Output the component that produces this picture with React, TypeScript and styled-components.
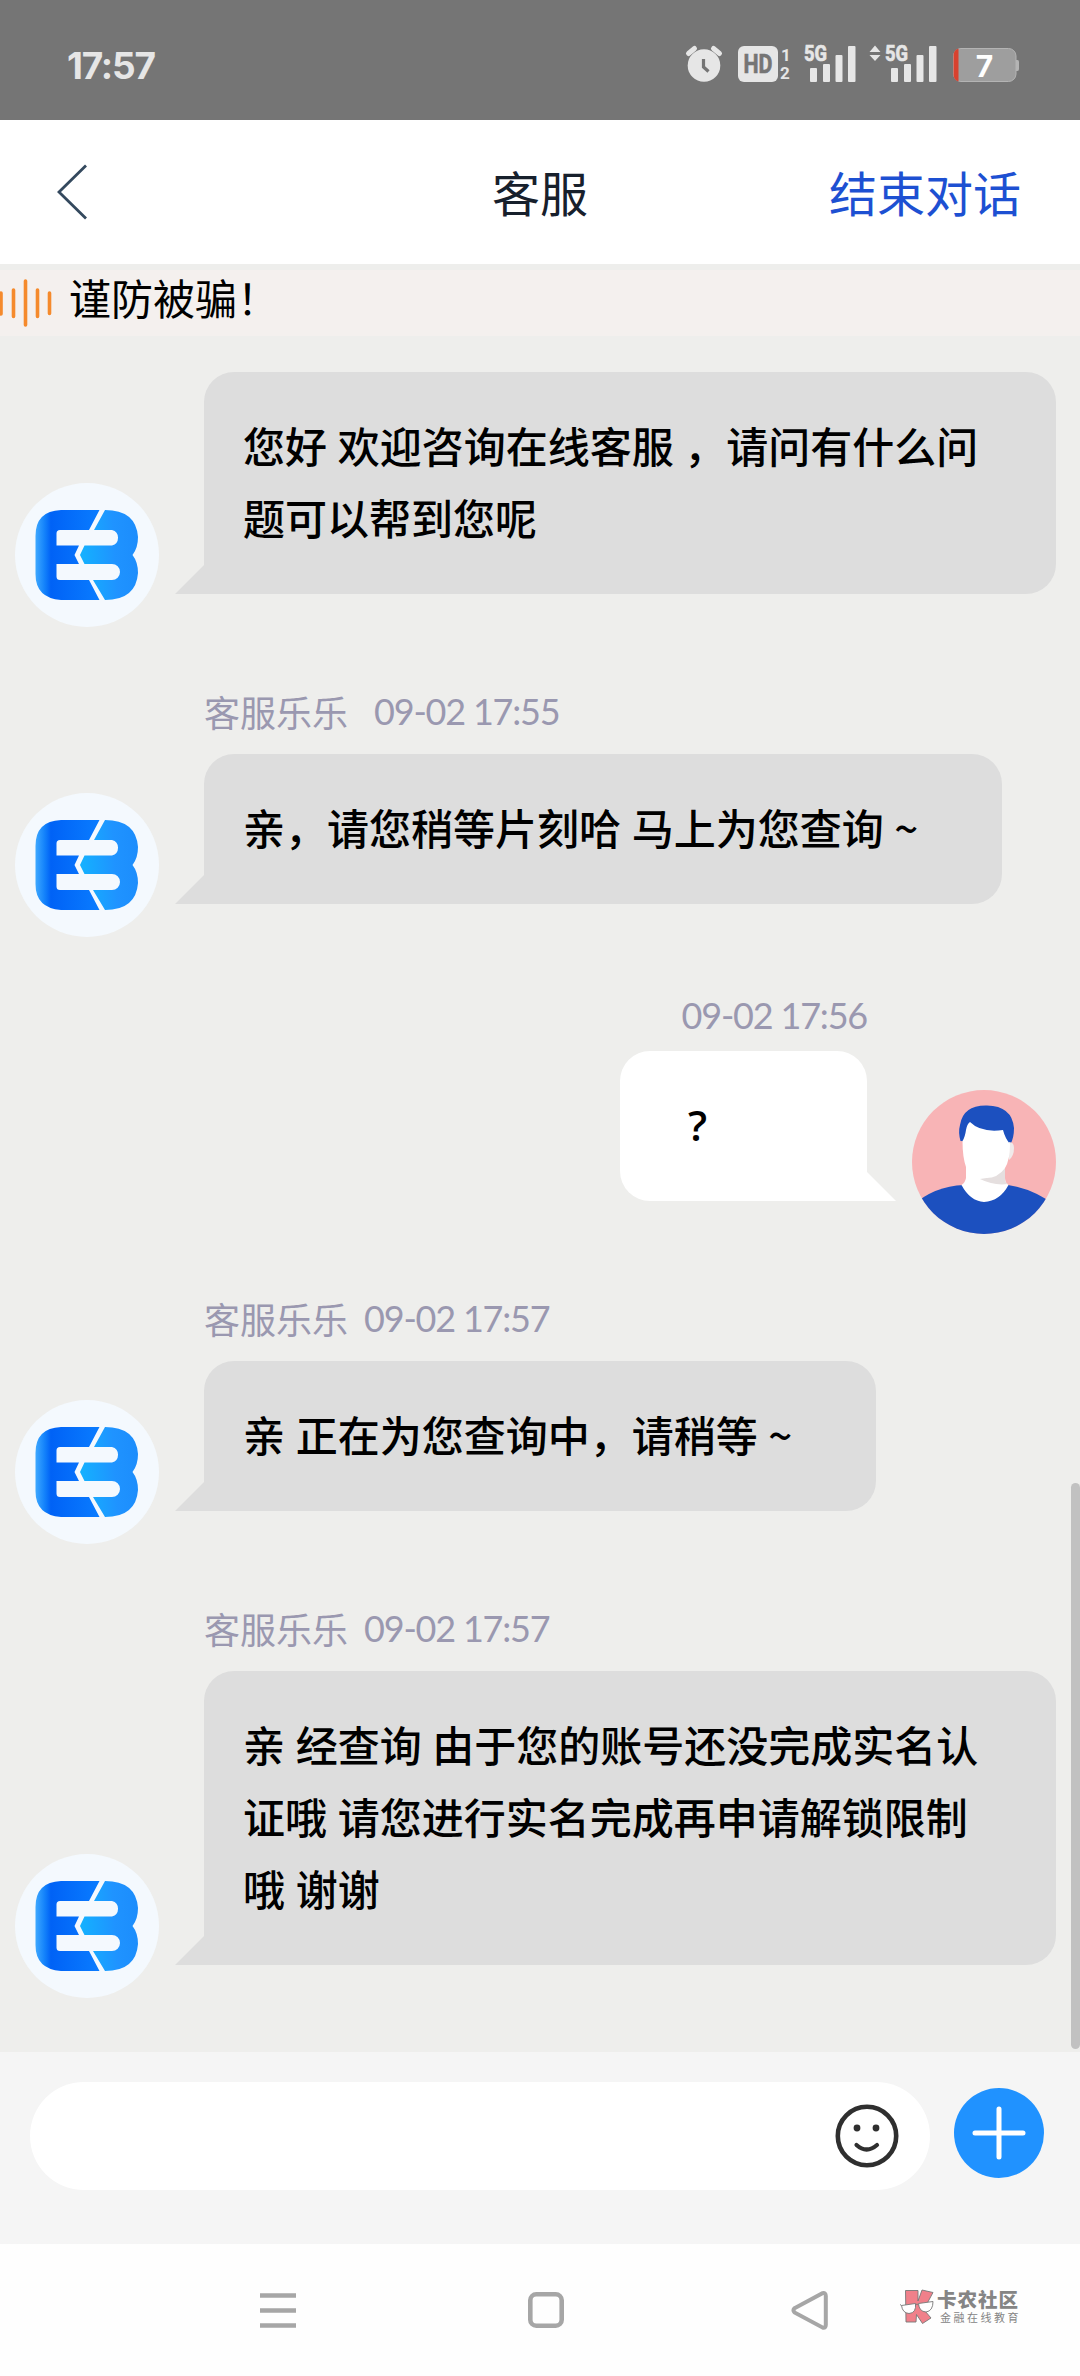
import React from "react";
import styled, { createGlobalStyle, css } from "styled-components";

const cjk = '"Noto Sans CJK SC", "Noto Sans", sans-serif';

const GlobalStyle = createGlobalStyle`
  * { box-sizing: border-box; }
  body { margin: 0; background: #fefefe; font-family: ${cjk}; }
`;

const Screen = styled.div`
  width: 1080px;
  height: 2376px;
  display: flex;
  flex-direction: column;
  overflow: hidden;
  background: #eeeeec;
`;

const StatusBar = styled.header`
  height: 120px;
  flex: none;
  display: flex;
  justify-content: space-between;
  padding: 0 60px 0 67px;
  background: #757575;
`;

const Clock = styled.span`
  margin-top: 44px;
  font: 700 37px/44px Inter, sans-serif;
  letter-spacing: -1.2px;
  color: #e6e6e6;
`;

const StatusIcons = styled.svg`
  display: block;
  width: 340px;
  height: 120px;
  text { font-family: Roboto, sans-serif; font-weight: 700; }
`;

const BatteryLevel = styled.text`
  && { font-family: Inter, sans-serif; }
`;

const TitleBar = styled.nav`
  height: 144px;
  flex: none;
  display: grid;
  grid-template-columns: 1fr auto 1fr;
  align-items: center;
  padding: 0 60px 0 54px;
  background: #fff;
  font-size: 48px;
  line-height: 72px;
`;

const BackIcon = styled.svg`
  width: 36px;
  height: 60px;
`;

const Title = styled.h1`
  margin: 0 0 3px;
  padding-left: 6px;
  font-size: 48px;
  font-weight: 400;
  color: #17202c;
`;

const EndButton = styled.button`
  justify-self: end;
  margin: 0 -1px 3px 0;
  padding: 0;
  border: 0;
  background: none;
  font: inherit;
  color: #1d50d2;
`;

const Notice = styled.div`
  height: 66px;
  flex: none;
  margin-top: 6px;
  display: flex;
  gap: 16px;
  background: #f4f0ee;
  font-size: 42px;
  line-height: 53px;
  color: #000;
`;

const SoundIcon = styled.svg`
  width: 53px;
  height: 66px;
`;

const ChatArea = styled.div`
  flex: 1;
  display: flex;
  min-height: 0;
`;

const Messages = styled.main`
  flex: 1;
  padding: 36px 15px 0 15px;
`;

const ScrollThumb = styled.div`
  width: 9px;
  height: 566px;
  align-self: flex-end;
  margin-bottom: 3px;
  border-radius: 5px;
  background: #c1c1c1;
`;

const Row = styled.section<{ $mine?: boolean; $gap: number }>`
  display: flex;
  flex-direction: ${(p) => (p.$mine ? "row-reverse" : "row")};
  align-items: flex-end;
  gap: 45px;
  margin-top: ${(p) => p.$gap}px;
`;

const Avatar = styled.svg`
  display: block;
  width: 144px;
  height: 144px;
  flex: none;
`;

const Body = styled.div<{ $mine?: boolean }>`
  display: flex;
  flex-direction: column;
  align-items: ${(p) => (p.$mine ? "flex-end" : "flex-start")};
  padding-bottom: 33px;
`;

const Meta = styled.div<{ $mine?: boolean; $gap?: number }>`
  display: flex;
  gap: ${(p) => p.$gap ?? 16}px;
  height: 36px;
  margin-bottom: ${(p) => (p.$mine ? 18 : 25)}px;
  font-size: 36px;
  line-height: 36px;
  color: #9a98b0;
`;

const Time = styled.time`
  font-family: Lato, sans-serif;
  letter-spacing: -1.2px;
`;

const leftTail = css`
  border-radius: 30px 30px 30px 0;
  &::after {
    left: -29px;
    clip-path: polygon(100% 0, 100% 100%, 0 100%);
  }
`;

const rightTail = css`
  border-radius: 30px 30px 0 30px;
  &::after {
    right: -29px;
    clip-path: polygon(0 0, 100% 100%, 0 100%);
  }
`;

const Bubble = styled.div<{ $mine?: boolean; $width: number }>`
  position: relative;
  width: ${(p) => p.$width}px;
  padding: ${(p) => (p.$mine ? "38px 0 40px 68px" : "37px 0 41px 39px")};
  background: ${(p) => (p.$mine ? "#fff" : "#ddd")};
  font-family: ${(p) => (p.$mine ? `"Open Sans", ${cjk}` : cjk)};
  font-size: 42px;
  font-weight: ${(p) => (p.$mine ? 600 : 500)};
  line-height: 72px;
  white-space: pre;
  color: #000;
  &::after {
    content: "";
    position: absolute;
    bottom: 0;
    width: 30px;
    height: 30px;
    background: inherit;
  }
  ${(p) => (p.$mine ? rightTail : leftTail)}
`;

const Line = styled.div`
  height: 72px;
  word-spacing: 1.2px;
`;

const Composer = styled.footer`
  height: 192px;
  flex: none;
  display: flex;
  align-items: flex-start;
  gap: 24px;
  padding: 30px 36px 0 30px;
  background: #f5f5f5;
`;

const InputPill = styled.div`
  width: 900px;
  height: 108px;
  display: flex;
  align-items: center;
  justify-content: flex-end;
  padding-right: 31px;
  border-radius: 54px;
  background: #fff;
`;

const Smile = styled.svg`
  width: 64px;
  height: 64px;
`;

const AddButton = styled.svg`
  width: 90px;
  height: 90px;
  margin-top: 6px;
`;

const NavBar = styled.div`
  height: 132px;
  flex: none;
  display: flex;
  background: #fefefe;
`;

const NavIcons = styled.svg`
  width: 900px;
  height: 132px;
`;

const Watermark = styled.div`
  display: flex;
  gap: 3px;
  padding-top: 44px;
`;

const WatermarkLogo = styled.svg`
  width: 34px;
  height: 38px;
`;

const WatermarkText = styled.div`
  display: flex;
  flex-direction: column;
  padding-top: 1px;
  font-family: "Liberation Sans", ${cjk};
  white-space: nowrap;
  color: #858585;
`;

const Brand = styled.span`
  font-size: 19.5px;
  font-weight: 900;
  line-height: 23px;
  letter-spacing: 1px;
`;

const Slogan = styled.span`
  padding-left: 3px;
  font-size: 11px;
  line-height: 13px;
  letter-spacing: 2.5px;
`;

function Signal({ x }: { x: number }) {
  return (
    <g fill="#e6e6e6">
      <text x={x} y={61} fontSize={21.5} textLength={23} lengthAdjust="spacingAndGlyphs" stroke="#e6e6e6" strokeWidth={0.7}>5G</text>
      <rect x={x + 6} y={68} width={7} height={14} rx={1} />
      <rect x={x + 19} y={64} width={7} height={18} rx={1} />
      <rect x={x + 31.5} y={55} width={7} height={27} rx={1} />
      <rect x={x + 44} y={46} width={7.5} height={36} rx={1} />
    </g>
  );
}

function StatusGlyphs() {
  return (
    <StatusIcons viewBox="680 0 340 120">
      <circle cx="704" cy="65.5" r="16.3" fill="#e6e6e6" />
      <path d="M688.500 53.500l6-5M719.500 53.500l-6-5" stroke="#e6e6e6" strokeWidth="5" strokeLinecap="round" />
      <path d="M703.500 59v8l5 4.500" stroke="#757575" strokeWidth="3.200" fill="none" />
      <rect x="738" y="46" width="40" height="36" rx="6" fill="#e6e6e6" />
      <text x="743.500" y="73" fontSize="25" fill="#757575" textLength="29" lengthAdjust="spacingAndGlyphs" stroke="#757575" strokeWidth="0.600">HD</text>
      <text x="781" y="61" fontSize="17" fill="#e6e6e6">1</text>
      <text x="780" y="79" fontSize="17" fill="#e6e6e6">2</text>
      <Signal x={804} />
      <path d="M869.500 52l5.500-6.500 5.500 6.500zM869.500 55l5.500 6 5.500-6z" fill="#e6e6e6" />
      <Signal x={885} />
      <path d="M1016 60h1.500q1.500 0 1.500 2v7q0 2-1.500 2H1016z" fill="#b4b4b4" />
      <rect x="953.500" y="48.500" width="62.500" height="33" rx="7.500" fill="#9e9e9e" stroke="#b4b4b4" />
      <path d="M958.500 48.500v33q-5-1.500-5-7v-19q0-5.500 5-7z" fill="#d8412f" />
      <BatteryLevel x="984.500" y="76.500" fontSize="30" fill="#fff" textAnchor="middle">7</BatteryLevel>
    </StatusIcons>
  );
}

function AgentAvatar() {
  return (
    <Avatar viewBox="0 0 144 144">
      <defs>
        <linearGradient id="agentLeft" x1="0" x2="1" y1="0" y2="0">
          <stop offset="0" stopColor="#3fa9ff" />
          <stop offset="0.140" stopColor="#1483fb" />
          <stop offset="0.240" stopColor="#0062f6" />
          <stop offset="1" stopColor="#0a7cff" />
        </linearGradient>
        <linearGradient id="agentRight" x1="0" x2="1" y1="0.500" y2="0.400">
          <stop offset="0" stopColor="#14b2ff" />
          <stop offset="0.600" stopColor="#1f93ff" />
          <stop offset="1" stopColor="#1c8dfc" />
        </linearGradient>
      </defs>
      <circle cx="72" cy="72" r="72" fill="#f4f9fe" />
      <path d="M46 27H84.500L74 47H45q-3.500 0-3.500 3.500V62.500H64L59.500 72 64 81H41.500V93.500q0 3.500 3.500 3.500H74L84.500 117H46Q20.500 115 20.500 91V53Q20.500 28 46 27z" fill="url(#agentLeft)" />
      <path d="M90 27Q121 27 123 54 123 65 117.500 72 123 79 123 90 121 117 90 117L78 97H97a8 8 0 0 0 0-16H69.500L65 72 69.500 62.500H97a8 8 0 0 0 0-15.500H79z" fill="url(#agentRight)" />
    </Avatar>
  );
}

function UserAvatar() {
  return (
    <Avatar viewBox="0 0 144 144">
      <defs>
        <clipPath id="userClip"><circle cx="72" cy="72" r="72" /></clipPath>
      </defs>
      <g clipPath="url(#userClip)">
        <rect width="144" height="144" fill="#f8b4b6" />
        <path d="M0 116Q22 96 52 95H96Q122 99 144 116V144H0z" fill="#1c50bf" />
        <path d="M54 72V88Q53 93 49.500 95 58 111 72 112 88 111 96.500 95 93 93 93 88V72z" fill="#fff" />
        <path d="M68 89Q83 88 93 75V88Q93 93 96 94 82 96 68 89z" fill="#e5dfdf" />
        <path d="M48.500 51Q46 42 48 35 51 15 75 15.500 100 16 102 38 102 48 98.500 54z" fill="#1c50bf" />
        <path d="M97 52q5 0 5 6 0 8-5 12z" fill="#f0eaea" />
        <path d="M58 32Q69 43 91 40 93 48 98 54 98 70 93 78 86 88 74 88 61 87 54 77 50.500 67 50.500 51 53 47 54 40 55 34 58 32z" fill="#fff" />
      </g>
    </Avatar>
  );
}

type Message = {
  mine?: boolean;
  name?: string;
  time?: string;
  gap: number;
  metaGap?: number;
  width: number;
  lines: string[];
};

const messages: Message[] = [
  { gap: 0, width: 852, lines: ["您好 欢迎咨询在线客服 ，请问有什么问", "题可以帮到您呢"] },
  { gap: 66, name: "客服乐乐", time: "09-02 17:55", metaGap: 26, width: 798, lines: ["亲，请您稍等片刻哈 马上为您查询 ~"] },
  { gap: 60, mine: true, time: "09-02 17:56", width: 247, lines: ["?"] },
  { gap: 66, name: "客服乐乐", time: "09-02 17:57", width: 672, lines: ["亲 正在为您查询中，请稍等 ~"] },
  { gap: 66, name: "客服乐乐", time: "09-02 17:57", width: 852, lines: ["亲 经查询 由于您的账号还没完成实名认", "证哦 请您进行实名完成再申请解锁限制", "哦 谢谢"] },
];

function MessageRow({ m }: { m: Message }) {
  return (
    <Row $mine={m.mine} $gap={m.gap}>
      {m.mine ? <UserAvatar /> : <AgentAvatar />}
      <Body $mine={m.mine}>
        {m.time && (
          <Meta $mine={m.mine} $gap={m.metaGap}>
            {m.name && <span>{m.name}</span>}
            <Time>{m.time}</Time>
          </Meta>
        )}
        <Bubble $mine={m.mine} $width={m.width}>
          {m.lines.map((line) => <Line key={line}>{line}</Line>)}
        </Bubble>
      </Body>
    </Row>
  );
}

export default function App() {
  return (
    <Screen>
      <GlobalStyle />
      <StatusBar>
        <Clock>17:57</Clock>
        <StatusGlyphs />
      </StatusBar>
      <TitleBar>
        <BackIcon viewBox="0 0 36 60">
          <path d="M32 3.500L5 30 32 56.500" fill="none" stroke="#34495e" strokeWidth="2.800" />
        </BackIcon>
        <Title>客服</Title>
        <EndButton>结束对话</EndButton>
      </TitleBar>
      <Notice>
        <SoundIcon viewBox="0 0 53 66">
          <path d="M1 23V44M13.500 20V46.500M25.500 11V55M37.500 20V46.500M49.500 23V43.500" stroke="#f58a2c" strokeWidth="3.600" strokeLinecap="round" />
        </SoundIcon>
        <span>谨防被骗！</span>
      </Notice>
      <ChatArea>
        <Messages>
          {messages.map((m, i) => <MessageRow key={i} m={m} />)}
        </Messages>
        <ScrollThumb />
      </ChatArea>
      <Composer>
        <InputPill>
          <Smile viewBox="0 0 64 64">
            <circle cx="32" cy="32" r="29.200" fill="none" stroke="#2f2f2f" strokeWidth="4.600" />
            <circle cx="22" cy="24" r="3.400" fill="#2f2f2f" />
            <circle cx="41" cy="24" r="3.400" fill="#2f2f2f" />
            <path d="M21.500 41Q31.500 50 42 41" fill="none" stroke="#2f2f2f" strokeWidth="4.200" strokeLinecap="round" />
          </Smile>
        </InputPill>
        <AddButton viewBox="0 0 90 90">
          <circle cx="45" cy="45" r="45" fill="#2092ff" />
          <path d="M21 45H69M45 21V69" stroke="#fff" strokeWidth="5" strokeLinecap="round" />
        </AddButton>
      </Composer>
      <NavBar>
        <NavIcons viewBox="0 2244 900 132">
          <path d="M260 2295.500h36M260 2310.500h36M260 2325.500h36" stroke="#a6a6a6" strokeWidth="4.500" />
          <rect x="530.300" y="2294.300" width="31.400" height="31.400" rx="6" fill="none" stroke="#a6a6a6" strokeWidth="4.600" />
          <path d="M794.500 2308.200L822.500 2293.200Q825.800 2292.500 825.800 2296V2325Q825.800 2328.500 822.500 2327.500L794.500 2312.500Q792.500 2310.300 794.500 2308.200z" fill="none" stroke="#a6a6a6" strokeWidth="4" />
        </NavIcons>
        <Watermark>
          <WatermarkLogo viewBox="0 0 34 38">
            <g fill="#f0808a" stroke="#777" strokeWidth="0.900">
              <path d="M5.500 2.500H18V13L22 2 33 4.500 26 17.500 22 19.500 31 30 22.500 35.500 16.500 26.500 16 34H6z" />
            </g>
            <g fill="#fff" stroke="#777" strokeWidth="0.900">
              <path d="M1.500 17.500L15.500 15.500Q16.500 25 9 25.500 2.500 25 1.500 17.500z" />
              <path d="M18.500 15.500L33 13.500Q33 23 26 24 19 23.500 18.500 15.500z" />
              <path d="M0 16.500l1.500 1M15.500 17q1.500-2 3 0" fill="none" />
            </g>
          </WatermarkLogo>
          <WatermarkText>
            <Brand>卡农社区</Brand>
            <Slogan>金融在线教育</Slogan>
          </WatermarkText>
        </Watermark>
      </NavBar>
    </Screen>
  );
}
